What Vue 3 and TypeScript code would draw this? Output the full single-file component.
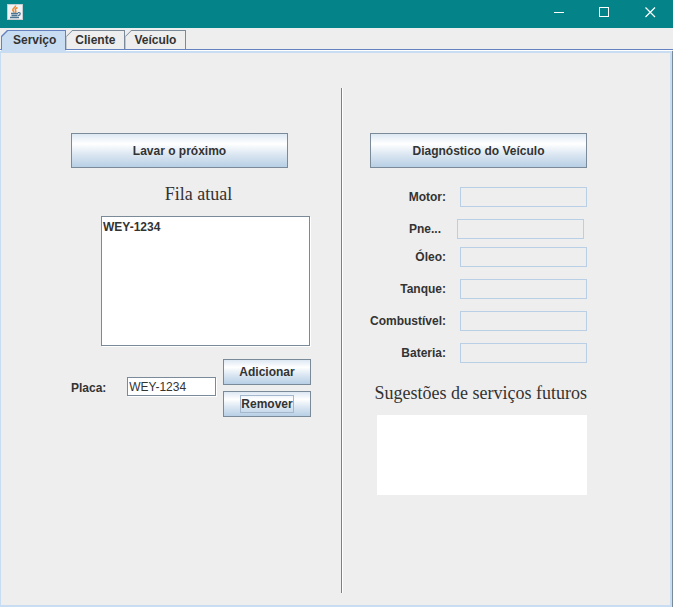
<script setup lang="ts">
import { ref } from 'vue'

interface Reading {
  id: string
  label: string
  value: string
  kind?: string
}

const tabs = ['Serviço', 'Cliente', 'Veículo']
const activeTab = ref(0)
const queue = ref<string[]>(['WEY-1234'])
const plate = ref('WEY-1234')
const readings = ref<Reading[]>([
  { id: 'motor', label: 'Motor:', value: '' },
  { id: 'pneus', label: 'Pne...', value: '', kind: 'narrow' },
  { id: 'oleo', label: 'Óleo:', value: '' },
  { id: 'tanque', label: 'Tanque:', value: '' },
  { id: 'combustivel', label: 'Combustível:', value: '' },
  { id: 'bateria', label: 'Bateria:', value: '' },
])
const suggestions = ref('')

function addPlate() {
  if (plate.value) queue.value.push(plate.value)
}
function removePlate() {
  queue.value = queue.value.filter((item) => item !== plate.value)
}
function washNext() {
  queue.value.shift()
}
</script>

<template>
  <div class="window">
    <header class="titlebar">
      <svg class="app-icon" width="16" height="16" viewBox="0 0 16 16">
        <rect x="0.5" y="0.5" width="15" height="15" fill="#f1f2f3" stroke="#c6cdd0" />
        <path d="M8.500 1.500C9 3.500 5.500 4.200 5.800 6C6 7 7 7.500 7 8.700M10.500 3.500C8.300 4.600 7.800 5.500 8.600 6.500C9.200 7.300 8.900 8 8.300 8.700" fill="none" stroke="#ea8a35" stroke-width="1.500" />
        <path d="M4 9.500H11M4.500 11.500H10.500M3 13.500H12" fill="none" stroke="#4b7592" stroke-width="1.300" />
        <path d="M11 8.700C14 8 14 11 11 11.700" fill="none" stroke="#4b7592" stroke-width="1.200" />
      </svg>
      <nav class="controls">
        <button class="control" type="button">
          <svg width="11" height="11" viewBox="0 0 11 11" shape-rendering="crispEdges"><path d="M1 5.500H11" stroke="#fff" /></svg>
        </button>
        <button class="control" type="button">
          <svg width="11" height="11" viewBox="0 0 11 11" shape-rendering="crispEdges"><rect x="0.5" y="0.5" width="9" height="9" fill="none" stroke="#fff" /></svg>
        </button>
        <button class="control" type="button">
          <svg width="11" height="11" viewBox="0 0 11 11"><path d="M0.500 0.500L10 10M10 0.500L0.500 10" stroke="#fff" stroke-width="1.200" /></svg>
        </button>
      </nav>
    </header>

    <div class="tabs" role="tablist">
      <button
        v-for="(tab, index) in tabs"
        :key="tab"
        class="tab"
        :class="{ active: index === activeTab }"
        type="button"
        role="tab"
        :aria-selected="index === activeTab"
        @click="activeTab = index"
      >
        <span class="tab-text">{{ tab }}</span>
      </button>
    </div>

    <main class="panel">
      <section class="queue">
        <button class="btn wide" type="button" @click="washNext">Lavar o próximo</button>
        <h2 class="heading queue-heading">Fila atual</h2>
        <ul class="list">
          <li v-for="item in queue" :key="item">{{ item }}</li>
        </ul>
        <form class="plate-form" @submit.prevent>
          <label for="plate">Placa:</label>
          <input id="plate" v-model="plate" class="plate" type="text" />
          <div class="actions">
            <button class="btn" type="button" @click="addPlate">Adicionar</button>
            <button class="btn" type="button" @click="removePlate"><span class="focus">Remover</span></button>
          </div>
        </form>
      </section>

      <div class="divider"></div>

      <section class="diagnosis">
        <button class="btn wide" type="button">Diagnóstico do Veículo</button>
        <div class="readings">
          <div v-for="reading in readings" :key="reading.id" class="reading" :class="reading.kind">
            <label :for="reading.id">{{ reading.label }}</label>
            <input :id="reading.id" v-model="reading.value" type="text" readonly />
          </div>
        </div>
        <h2 class="heading"><label for="suggestions">Sugestões de serviços futuros</label></h2>
        <textarea id="suggestions" v-model="suggestions" class="suggestions"></textarea>
      </section>
    </main>
  </div>
</template>

<style>
body {
  margin: 0;
  background: #eeeeee;
}
</style>

<style scoped>
* {
  box-sizing: border-box;
}
.window {
  display: flex;
  flex-direction: column;
  min-height: 100vh;
  background: #eeeeee;
  color: #333333;
  font: bold 12px/16px "Liberation Sans", Arial, sans-serif;
}
button,
input,
textarea {
  font: inherit;
  color: inherit;
  margin: 0;
  padding: 0;
  border: 0;
  border-radius: 0;
  outline: none;
}
.titlebar {
  display: flex;
  justify-content: space-between;
  height: 28px;
  background: #048488;
}
.app-icon {
  margin: 4px 0 0 7px;
}
.controls {
  display: flex;
}
.control {
  display: flex;
  justify-content: center;
  width: 46px;
  padding-top: 7px;
  background: none;
}
.tabs {
  display: flex;
  height: 22px;
  padding: 2px 0 0 1px;
  border-bottom: 1px solid #6382bf;
}
.tab {
  position: relative;
  height: 19px;
  padding: 0 10px 0 9px;
  background: #7a8a99;
  clip-path: polygon(0 6px, 6px 0, 100% 0, 100% 100%, 0 100%);
}
.tab::before {
  content: "";
  position: absolute;
  inset: 1px 1px 0 0;
  background: #eeeeee;
  clip-path: polygon(0 6px, 6px 0, 100% 0, 100% 100%, 0 100%);
}
.tab.active {
  height: 23px;
  padding: 0 10px 4px 12px;
  background: linear-gradient(#6382bf 20px, #c8ddf2 20px);
  z-index: 1;
}
.tab.active::before {
  left: 1px;
  background: #c8ddf2;
}
.tab-text {
  position: relative;
}
.panel {
  flex: 1;
  display: grid;
  grid-template-columns: max-content 2px 1fr;
  margin-top: 1px;
  padding: 35px 0 12px;
  border: solid #c8ddf2;
  border-width: 2px 2px 2px 1px;
  margin-right: 1px;
  box-shadow: 1px 0 #7a8a99, 0 -1px #ffffff;
}
.divider {
  background: linear-gradient(to right, #6382bf 50%, #ffffff 50%);
}
.queue {
  padding: 45px 30px 0 70px;
}
.diagnosis {
  display: flex;
  flex-direction: column;
  align-items: flex-end;
  justify-self: start;
  padding: 45px 27px 0;
}
.btn {
  display: flex;
  align-items: center;
  justify-content: center;
  width: 88px;
  height: 26px;
  border: 1px solid #7a8a99;
  background: linear-gradient(#dde8f3, #ffffff 30%, #dde8f3 60%, #b8cfe5);
}
.wide {
  width: 217px;
  height: 35px;
}
.focus {
  border: 1px solid #a3b8cc;
}
.heading {
  margin: 0;
  font: 18px/24px "Liberation Serif", "Times New Roman", serif;
  white-space: nowrap;
}
.queue-heading {
  margin: 14px 0 10px;
  padding-left: 15px;
  text-align: center;
}
.list {
  width: 209px;
  height: 130px;
  margin: 0 0 0 30px;
  padding: 2px 1px;
  list-style: none;
  background: #ffffff;
  border: 1px solid #7a8a99;
  box-shadow: 1px 1px #ffffff;
}
.plate-form {
  display: flex;
  align-items: center;
  justify-content: space-between;
  width: 240px;
  margin-top: 13px;
}
.plate {
  width: 89px;
  height: 19px;
  margin: 0 0 3px 14px;
  padding: 1px 1px 0;
  font-weight: normal;
  background: #ffffff;
  border: 1px solid #7a8a99;
  box-shadow: 1px 1px #ffffff;
}
.actions {
  display: grid;
  gap: 6px;
}
.readings {
  display: grid;
  gap: 12px;
  margin: 19px 0 18px;
}
.reading {
  display: flex;
  align-items: center;
  justify-content: flex-end;
  gap: 14px;
}
.reading input {
  width: 127px;
  height: 20px;
  background: #eeeeee;
  border: 1px solid #b8cfe5;
}
.narrow {
  margin: 0 3px -4px 0;
}
.narrow label {
  width: 34px;
}
.suggestions {
  width: 210px;
  height: 80px;
  margin-top: 10px;
  resize: none;
  background: #ffffff;
}
</style>
